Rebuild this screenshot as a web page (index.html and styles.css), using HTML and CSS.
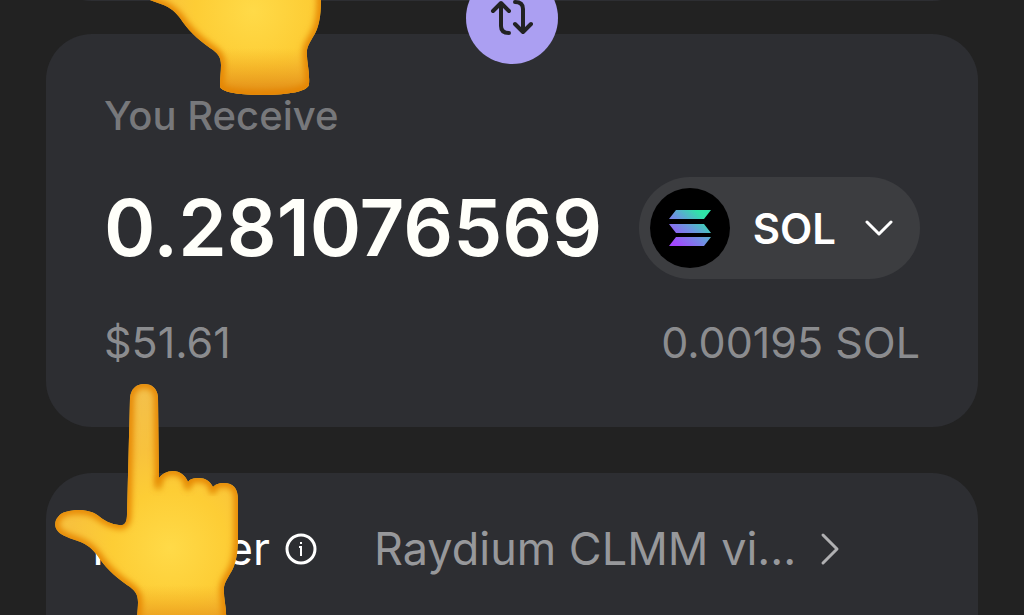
FILE: index.html
```html
<!DOCTYPE html>
<html lang="en">
<head>
    <meta charset="UTF-8">
    <meta name="viewport" content="width=device-width, initial-scale=1.0">
    <title>Swap</title>
    <link rel="stylesheet" href="styles.css">
</head>
<body>
    <!-- shared hand drawing, used by both pointers -->
    <svg class="defs" width="0" height="0" aria-hidden="true">
        <defs>
            <radialGradient id="skin" gradientUnits="userSpaceOnUse" cx="120" cy="168" r="165">
                <stop offset="0" stop-color="#ffda48"/>
                <stop offset="0.35" stop-color="#fdcd35"/>
                <stop offset="0.6" stop-color="#f8c23c"/>
                <stop offset="1" stop-color="#f3c04c"/>
            </radialGradient>
            <linearGradient id="wrist" gradientUnits="userSpaceOnUse" x1="0" y1="205" x2="0" y2="252">
                <stop offset="0" stop-color="#f0a01c" stop-opacity="0"/>
                <stop offset="1" stop-color="#e08a14"/>
            </linearGradient>
            <filter id="soft" x="-20%" y="-20%" width="140%" height="140%">
                <feGaussianBlur stdDeviation="3"/>
            </filter>
            <path id="handShape" d="M94 4C86 4 81 9 80 18L77 134C77 142 75 146 69 145C61 144 55 141 50 137C44 132 37 130 29 130C20 130 11 132 8 137C5 140 4 146 7 150C10 155 17 157 25 160C35 163 41 167 47 175C54 186 64 196 77 205C85 210 88 214 88 222C88 230 87 235 87 243C87 249 105 252 130 252C156 252 176 248 176 241C177 228 173 217 174 207C175 200 181 194 184 186C187 178 188 168 188 157L188 120C188 108 183 103 174 103C168 103 165 105 163 107C160 101 155 98 149 98C143 98 140 99 138 102C135 95 130 91 123 91C117 91 112 94 109 98L108 17C107 8 102 4 94 4Z"/>
            <clipPath id="handClip"><use href="#handShape"/></clipPath>
            <symbol id="hand" viewBox="0 0 195 260">
                <use href="#handShape" fill="url(#skin)"/>
                <g clip-path="url(#handClip)">
                    <rect x="80" y="205" width="100" height="50" fill="url(#wrist)"/>
                    <use href="#handShape" fill="none" stroke="#e58403" stroke-width="8" filter="url(#soft)"/>
                    <path d="M109 98V109M138 102V109M163 107V113" fill="none" stroke="#e08a10" stroke-width="4" filter="url(#soft)"/>
                </g>
            </symbol>
        </defs>
    </svg>

    <main class="swap">
        <section class="card card-pay"></section>

        <section class="card card-receive">
            <button class="switch-btn" aria-label="Switch tokens">
                <svg width="44" height="40" viewBox="0 0 44 40" aria-hidden="true">
                    <path d="M3 13L11 5L19 13M11 6V28Q11 35 19 35M25 4Q33 4 33 11V33M25 26L33 34L41 26"/>
                </svg>
            </button>

            <label class="title" for="amount">You Receive</label>
            <div class="row">
                <input class="amount" id="amount" type="text" value="0.281076569" readonly>
                <button class="token-btn">
                    <svg class="token-logo" width="80" height="80" viewBox="0 0 80 80" aria-hidden="true">
                        <defs>
                            <linearGradient id="sol" gradientUnits="userSpaceOnUse" x1="22" y1="60" x2="56" y2="20">
                                <stop offset="0.1" stop-color="#a347ff"/>
                                <stop offset="0.5" stop-color="#6c94e0"/>
                                <stop offset="0.85" stop-color="#2fe5a8"/>
                            </linearGradient>
                        </defs>
                        <circle cx="40" cy="40" r="40" fill="#000"/>
                        <path fill="url(#sol)" d="M26 22H61L54 31H19ZM19 36H54L61 45H26ZM26 49H61L54 58H19Z"/>
                    </svg>
                    <span>SOL</span>
                    <svg class="chevron" width="28" height="18" viewBox="0 0 28 18" aria-hidden="true">
                        <path d="M2 3L14 15L26 3"/>
                    </svg>
                </button>
            </div>
            <div class="row balance">
                <span>$51.61</span>
                <span>0.00195 SOL</span>
            </div>
        </section>

        <section class="card card-provider">
            <span class="provider-label">Provider</span>
            <button class="info-btn" aria-label="About providers">
                <svg width="34" height="34" viewBox="0 0 34 34" aria-hidden="true">
                    <circle cx="17" cy="17" r="14"/>
                    <path d="M15 15H17V24M17 10V12"/>
                </svg>
            </button>
            <a class="route" href="#">
                Raydium CLMM vi...
                <svg width="20" height="34" viewBox="0 0 20 34" aria-hidden="true">
                    <path d="M3 3L17 17L3 31"/>
                </svg>
            </a>
        </section>
    </main>

    <svg class="hand hand-top" viewBox="0 0 195 260" aria-hidden="true"><use href="#hand"/></svg>
    <svg class="hand hand-bottom" viewBox="0 0 195 260" aria-hidden="true"><use href="#hand"/></svg>
</body>
</html>
```
FILE: styles.css
```css
* {
    box-sizing: border-box;
}

html {
    overflow: hidden;
}

body {
    margin: 0;
    height: 100vh;
    position: relative;
    overflow: hidden;
    background: #222222;
    color: #fff;
    font-family: Inter, "Liberation Sans", sans-serif;
}

button {
    padding: 0;
    border: none;
    background: none;
    color: inherit;
    font-family: inherit;
    cursor: pointer;
}

svg {
    flex-shrink: 0;
    fill: none;
}

.defs {
    position: absolute;
}

.swap {
    display: flex;
    flex-direction: column;
    min-height: 100vh;
    padding: 0 46px;
}

.card {
    position: relative;
    background: #2d2e32;
    border-radius: 46px;
}

.card-pay {
    height: 92px;
    margin-top: -91px;
}

.card-receive {
    margin-top: 33px;
    padding: 58px 58px 60px;
}

.switch-btn {
    position: absolute;
    top: -62px;
    left: 50%;
    width: 92px;
    height: 92px;
    margin-left: -46px;
    border-radius: 50%;
    background: #ab9ff2;
    display: flex;
    align-items: center;
    justify-content: center;
}

.switch-btn path {
    stroke: #222222;
    stroke-width: 4;
    stroke-linecap: round;
    stroke-linejoin: round;
}

.title {
    display: block;
    color: #77787b;
    font-size: 40px;
    font-weight: 500;
    line-height: 48px;
}

.row {
    display: flex;
    align-items: center;
    justify-content: space-between;
}

.row .amount {
    flex: 1;
    min-width: 0;
    height: 100px;
    padding: 0;
    border: none;
    outline: none;
    background: none;
    color: #fffffa;
    font-family: inherit;
    font-size: 78px;
    font-weight: 600;
}

.title + .row {
    margin-top: 37px;
    align-items: flex-start;
}

.token-btn {
    display: flex;
    align-items: center;
    gap: 23px;
    height: 102px;
    padding: 0 27px 0 11px;
    border-radius: 51px;
    background: #3c3d40;
    font-size: 42px;
    font-weight: 600;
}

.chevron {
    margin-left: 6px;
}

.chevron path {
    stroke: #fff;
    stroke-width: 3;
    stroke-linecap: round;
    stroke-linejoin: round;
}

.balance {
    margin-top: 38px;
    color: #8b8c8f;
    font-size: 43px;
    line-height: 50px;
}

.card-provider {
    flex: 1;
    display: flex;
    align-items: flex-start;
    margin-top: 46px;
    padding: 46px 46px 0;
    border-radius: 46px 46px 0 0;
    font-size: 45px;
    line-height: 60px;
}

.info-btn {
    display: flex;
    align-items: center;
    height: 60px;
    margin-left: 14px;
}

.info-btn svg {
    stroke: #fff;
    stroke-width: 3;
}

.info-btn path {
    stroke-width: 2;
}

.route {
    display: flex;
    align-items: center;
    gap: 24px;
    margin-left: 56px;
    color: #97989b;
    text-decoration: none;
    white-space: nowrap;
}

.route path {
    stroke: #b0b0b2;
    stroke-width: 3;
    stroke-linecap: round;
    stroke-linejoin: round;
}

/* pointers laid over the cards */
.hand {
    position: absolute;
    width: 195px;
    height: 260px;
    pointer-events: none;
}

.hand-top {
    top: -157px;
    left: 133px;
}

.hand-bottom {
    top: 380px;
    left: 50px;
}
```
